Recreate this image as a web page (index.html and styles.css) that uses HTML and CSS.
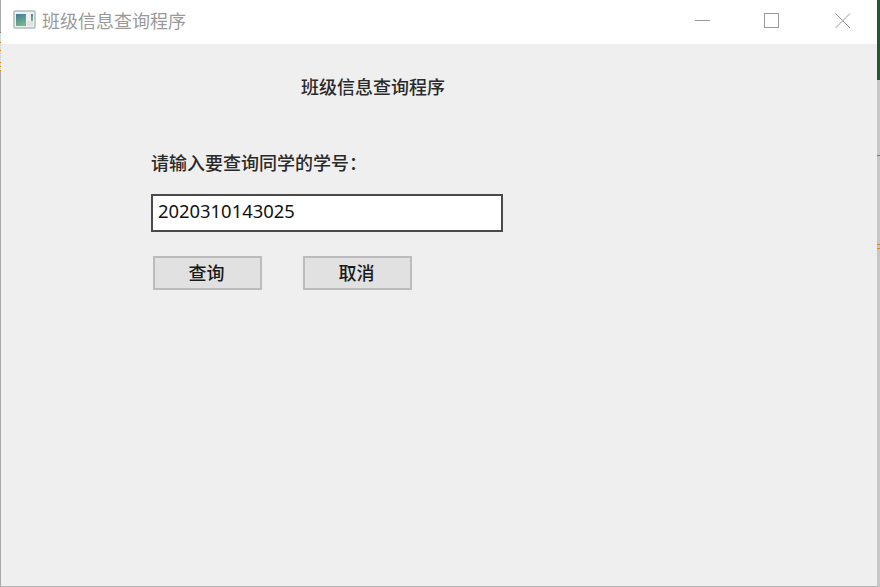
FILE: index.html
```html
<!DOCTYPE html>
<html lang="zh">
<head>
<meta charset="utf-8">
<title>班级信息查询程序</title>
<link rel="stylesheet" href="styles.css">
</head>
<body>
<div class="window">
  <header class="titlebar">
    <svg class="app-icon" width="24" height="20" viewBox="0 0 24 20">
      <defs>
        <linearGradient id="pane" x1="0" y1="0" x2="0.4" y2="1">
          <stop offset="0" stop-color="#3d7a9c"/>
          <stop offset="1" stop-color="#74b48a"/>
        </linearGradient>
      </defs>
      <rect x="1" y="1" width="21" height="17" rx="1" fill="#eef1f1" stroke="#b4bcbf" stroke-width="1.5"/>
      <rect x="3" y="4" width="10" height="12" fill="url(#pane)"/>
      <rect x="14" y="11" width="6" height="5" fill="#dfe3e3"/>
      <rect x="18" y="4" width="2" height="7" fill="url(#pane)"/>
    </svg>
    <span class="title">班级信息查询程序</span>
    <div class="controls">
      <svg class="ctl" width="16" height="16" viewBox="0 0 16 16"><path d="M0 7.5H15" stroke="#999" fill="none"/></svg>
      <svg class="ctl" width="16" height="16" viewBox="0 0 16 16"><rect x="0.5" y="0.5" width="14" height="14" stroke="#999" fill="none"/></svg>
      <svg class="ctl ctl-close" width="16" height="16" viewBox="0 0 16 16"><path d="M0.5 0.5L15 15M15 0.5L0.5 15" stroke="#999" fill="none"/></svg>
    </div>
  </header>
  <main class="client">
    <h1 class="heading">班级信息查询程序</h1>
    <section class="form">
      <label class="prompt" for="sid">请输入要查询同学的学号：</label>
      <input class="field" id="sid" type="text" value="2020310143025">
      <div class="buttons">
        <button class="btn" type="button">查询</button>
        <button class="btn" type="button">取消</button>
      </div>
    </section>
  </main>
</div>
</body>
</html>
```
FILE: styles.css
```css
* { box-sizing: border-box; }
html, body { margin: 0; height: 100%; }
body {
  width: 880px;
  height: 587px;
  overflow: hidden;
  background: linear-gradient(#1f5a2c 0 80px,
    #c6c6c6 80px 155px, #777 155px 156px,
    #c6c6c6 156px 244px, #d98a20 244px 245px,
    #c6c6c6 245px 248px, #d98a20 248px 249px,
    #c6c6c6 249px);
  font-family: "Noto Sans CJK SC", "Liberation Sans", sans-serif;
}
.window {
  position: relative;
  width: 877px;
  height: 587px;
  display: flex;
  flex-direction: column;
  border-left: 1px solid #a9a9a9;
  border-bottom: 1px solid #b5b5b5;
  background: #efefef;
}
/* desktop colours that show through along the window's left edge */
.window::before {
  content: "";
  position: absolute;
  left: -1px;
  top: 0;
  width: 1px;
  height: 80px;
  background: linear-gradient(#a9a9a9 0 32px, #777 32px 33px,
    #d8d8d8 33px 42px, #d98a20 42px 43px,
    #d8d8d8 43px 50px, #d98a20 50px 51px,
    #d8d8d8 51px 62px, #d98a20 62px 63px,
    #d8d8d8 63px 66px, #d98a20 66px 67px,
    #d8d8d8 67px 70px, #d98a20 70px 71px,
    #a9a9a9 71px);
}
.titlebar {
  height: 44px;
  flex: none;
  background: #fff;
  display: flex;
  align-items: center;
  padding-left: 12px;
}
.app-icon { flex: none; margin-right: 5px; margin-top: -4px; }
.title {
  font-size: 18px;
  color: #9a9a9a;
  margin-top: -4px;
}
.controls {
  margin-left: auto;
  display: flex;
  gap: 53px;
  padding-right: 26px;
  margin-top: -2px;
}
.ctl { display: block; }
.ctl-close { margin-left: 2px; }
.client {
  flex: 1;
  padding-top: 30px;
}
.heading {
  margin: 0 0 0 300px;
  font-size: 18px;
  font-weight: 500;
  line-height: 24px;
  color: #2a2a2a;
}
.form {
  margin: 52px 0 0 150px;
  display: flex;
  flex-direction: column;
  align-items: flex-start;
}
.prompt {
  font-size: 18px;
  font-weight: 500;
  line-height: 24px;
  color: #2a2a2a;
}
.field {
  width: 352px;
  height: 38px;
  margin-top: 20px;
  padding: 0 6px 5px 5px;
  border: 2px solid #4a4a4a;
  background: #fff;
  color: #111;
  font-family: "Noto Sans", "Liberation Sans", sans-serif;
  font-size: 18.4px;
  outline: none;
}
.buttons {
  display: flex;
  gap: 41px;
  margin: 24px 0 0 2px;
}
.btn {
  width: 109px;
  height: 34px;
  padding: 0 2px 2px 0;
  border: 2px solid #bcbcbc;
  background: #e1e1e1;
  color: #1a1a1a;
  font-family: inherit;
  font-size: 18px;
  font-weight: 500;
}
```
